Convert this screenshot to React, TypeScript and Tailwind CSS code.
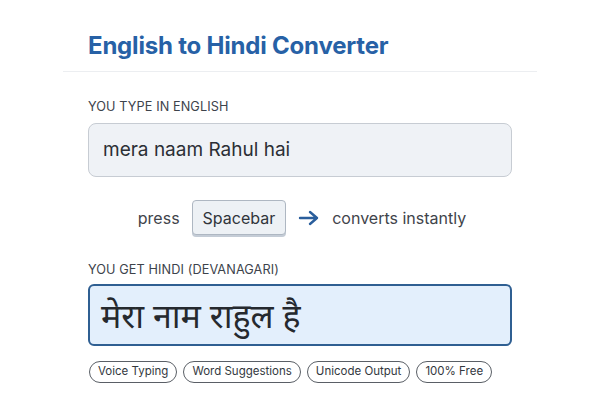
export default function App() {
  const chips = ['Voice Typing', 'Word Suggestions', 'Unicode Output', '100% Free'];
  return (
    <div className="w-[600px] h-[400px] bg-white overflow-hidden font-['Inter','Noto_Sans',sans-serif]">
      <div className="mx-[63px] pt-[31px] pb-[10px] border-b border-[#eceef1]">
        <h1 className="pl-[25px] text-[24px] leading-[30px] font-bold text-[#2761a6] tracking-[-0.2px]">
          English to Hindi Converter
        </h1>
      </div>
      <div className="px-[88px] pt-[27px]">
        <div className="text-[12.7px] leading-[16px] text-[#3d434b] tracking-[0.1px]">YOU TYPE IN ENGLISH</div>
        <div className="mt-[8px] w-[424px] h-[54px] rounded-[8px] border border-[#c7ccd3] bg-[#eff2f6] flex items-center px-[14px] text-[19px] text-[#2b2f35]">
          mera naam Rahul hai
        </div>
        <div className="mt-[23px] flex items-center justify-center gap-[12px] text-[16px] text-[#3f444b] pl-[4px]">
          <span>press</span>
          <span className="h-[35px] px-[10px] flex items-center rounded-[4px] border border-[#aeb7c2] bg-[#edf1f5] shadow-[0_2px_0_#c4ccd6] text-[16px] text-[#30353b]">
            Spacebar
          </span>
          <svg width="22" height="16" viewBox="0 0 22 16" fill="none" stroke="#2a5e9c" strokeWidth="2.4" strokeLinecap="round" strokeLinejoin="round">
            <path d="M2 8h17M12 2l7 6-7 6" />
          </svg>
          <span>converts instantly</span>
        </div>
        <div className="mt-[27px] text-[12.7px] leading-[16px] text-[#3d434b] tracking-[0.1px]">YOU GET HINDI (DEVANAGARI)</div>
        <div className="mt-[6px] w-[424px] h-[62px] rounded-[6px] border-2 border-[#2f5f92] bg-[#e3effc] flex items-center px-[11px] text-[34px] text-[#25292e] font-['Noto_Sans','Lohit_Devanagari',sans-serif]">
          मेरा नाम राहुल है
        </div>
        <div className="mt-[15px] flex gap-[6px] pl-[1px]">
          {chips.map((c) => (
            <span key={c} className="h-[22px] px-[8px] flex items-center rounded-full border border-[#5a5f66] text-[11.5px] text-[#33383e]">
              {c}
            </span>
          ))}
        </div>
      </div>
    </div>
  );
}
